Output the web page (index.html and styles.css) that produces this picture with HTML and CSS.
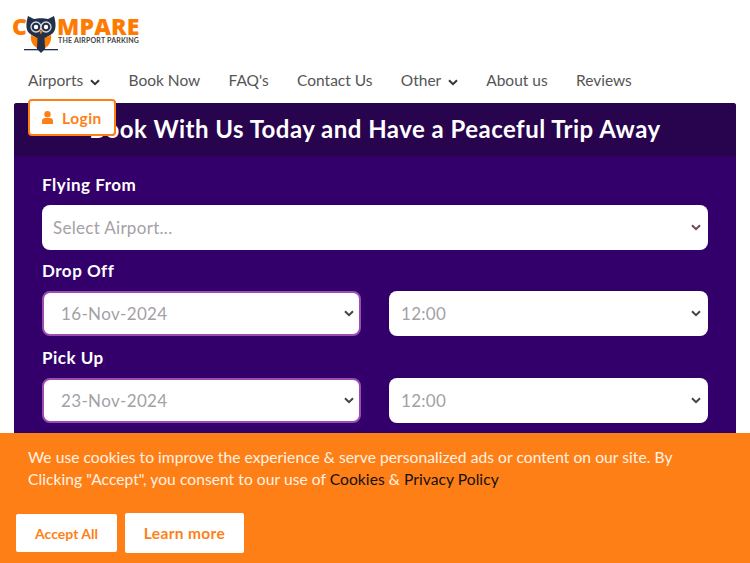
FILE: index.html
```html
<!DOCTYPE html>
<html lang="en">
<head>
  <meta charset="UTF-8">
  <meta name="viewport" content="width=device-width, initial-scale=1.0">
  <title>Compare The Airport Parking</title>
  <link rel="stylesheet" href="styles.css">
</head>
<body>

  <header class="site-header">
    <a class="logo" href="#">
      <span class="logo-c">C</span>
      <svg class="logo-owl" width="34" height="38" viewBox="0 0 34 38">
        <path d="M4 1 L10 4 C14 3 20 3 24 4 L30 1 C32 8 32.5 14 29 18 C27 20 24 21 23 22 L21 34 L17 38 L13 34 L11 22 C10 21 7 20 5 18 C1.5 14 2 8 4 1 Z" fill="#22304a"/>
        <path d="M7 20 C6 26 9 31 13 33 L13.5 23 Z" fill="#ff7a00"/>
        <path d="M27 20 C28 26 25 31 21 33 L20.5 23 Z" fill="#ff7a00"/>
        <circle cx="12" cy="12" r="5" fill="#22304a" stroke="#d5dae2" stroke-width="1.3"/>
        <circle cx="22" cy="12" r="5" fill="#22304a" stroke="#d5dae2" stroke-width="1.3"/>
        <circle cx="12" cy="12" r="2.2" fill="#fff"/>
        <circle cx="22" cy="12" r="2.2" fill="#fff"/>
        <path d="M15 15.5 L19 15.5 L17 19.5 Z" fill="#ff7a00"/>
        <rect x="0" y="34" width="34" height="1.3" fill="#22304a"/>
      </svg>
      <span class="logo-text">
        <span class="logo-main">MPARE</span>
        <span class="logo-sub">THE AIRPORT PARKING</span>
      </span>
    </a>

    <nav class="main-nav">
      <a href="#">Airports <svg class="caret" width="10" height="7" viewBox="0 0 10 7"><path d="M1 1.2 L5 5.2 L9 1.2" fill="none" stroke="#333" stroke-width="2"/></svg></a>
      <a href="#">Book Now</a>
      <a href="#">FAQ's</a>
      <a href="#">Contact Us</a>
      <a href="#">Other <svg class="caret" width="10" height="7" viewBox="0 0 10 7"><path d="M1 1.2 L5 5.2 L9 1.2" fill="none" stroke="#333" stroke-width="2"/></svg></a>
      <a href="#">About us</a>
      <a href="#">Reviews</a>
    </nav>

    <a class="login-btn" href="#">
      <svg width="11" height="13" viewBox="0 0 11 13"><circle cx="5.5" cy="3.2" r="3.2" fill="#ff7f17"/><path d="M0 13 L0 10 C0 8 1.5 7 3 7 L8 7 C9.5 7 11 8 11 10 L11 13 Z" fill="#ff7f17"/></svg>
      Login
    </a>
  </header>

  <section class="booking">
    <h1 class="booking-title">Book With Us Today and Have a Peaceful Trip Away</h1>
    <form class="booking-form">
      <label>Flying From</label>
      <div class="select-box">
        <span>Select Airport...</span>
        <svg class="select-caret" width="10" height="7" viewBox="0 0 10 7"><path d="M1 1.2 L5 5.2 L9 1.2" fill="none" stroke="#6b4a50" stroke-width="2"/></svg>
      </div>

      <label>Drop Off</label>
      <div class="form-row">
        <div class="select-box date"><span>16-Nov-2024</span><svg class="select-caret" width="10" height="7" viewBox="0 0 10 7"><path d="M1 1.2 L5 5.2 L9 1.2" fill="none" stroke="#444" stroke-width="2"/></svg></div>
        <div class="select-box"><span>12:00</span><svg class="select-caret" width="10" height="7" viewBox="0 0 10 7"><path d="M1 1.2 L5 5.2 L9 1.2" fill="none" stroke="#444" stroke-width="2"/></svg></div>
      </div>

      <label>Pick Up</label>
      <div class="form-row">
        <div class="select-box date"><span>23-Nov-2024</span><svg class="select-caret" width="10" height="7" viewBox="0 0 10 7"><path d="M1 1.2 L5 5.2 L9 1.2" fill="none" stroke="#444" stroke-width="2"/></svg></div>
        <div class="select-box"><span>12:00</span><svg class="select-caret" width="10" height="7" viewBox="0 0 10 7"><path d="M1 1.2 L5 5.2 L9 1.2" fill="none" stroke="#444" stroke-width="2"/></svg></div>
      </div>
    </form>
  </section>

  <!-- Cookie bar -->
  <div class="cookie-bar">
    <p>We use cookies to improve the experience &amp; serve personalized ads or content on our site. By Clicking "Accept", you consent to our use of <a href="#">Cookies</a> &amp; <a href="#">Privacy Policy</a></p>
    <div class="cookie-actions">
      <button class="btn-accept">Accept All</button>
      <button class="btn-learn">Learn more</button>
    </div>
  </div>

</body>
</html>
```

FILE: styles.css
```css
* {
  margin: 0;
  padding: 0;
  box-sizing: border-box;
}

body {
  font-family: "Lato", "Noto Sans", sans-serif;
  background: #fff;
  height: 563px;
  overflow: hidden;
  position: relative;
}

a {
  text-decoration: none;
}

/* Header */
.site-header {
  height: 103px;
  padding: 15px 14px 0 14px;
  position: relative;
}

.logo {
  display: flex;
  align-items: flex-start;
  height: 40px;
  margin-left: -2px;
}

.logo-c {
  font-family: "Open Sans", sans-serif;
  font-size: 23px;
  line-height: 28px;
  font-weight: 800;
  color: #ff7a00;
  width: 12px;
  margin-top: -3.5px;
}

.logo-owl {
  flex: none;
}

.logo-text {
  display: flex;
  flex-direction: column;
  margin-left: -1px;
}

.logo-main {
  font-family: "Open Sans", sans-serif;
  font-size: 23px;
  line-height: 28px;
  font-weight: 800;
  letter-spacing: 0.2px;
  color: #ff7a00;
  margin-top: -3.5px;
}

.logo-sub {
  font-size: 7px;
  line-height: 8px;
  font-weight: 700;
  letter-spacing: 0.2px;
  color: #444;
  margin-top: -4px;
  margin-left: 1px;
  white-space: nowrap;
}

.main-nav {
  display: flex;
  gap: 28.3px;
  padding-left: 14px;
  margin-top: 15px;
}

.main-nav a {
  font-size: 15.5px;
  line-height: 20px;
  color: #555;
  white-space: nowrap;
}

.caret {
  margin-left: 3px;
}

.login-btn {
  position: absolute;
  left: 28px;
  top: 99px;
  width: 88px;
  height: 37px;
  display: flex;
  align-items: center;
  gap: 9px;
  padding-left: 12px;
  background: #fff;
  border: 2px solid #ff7f17;
  border-radius: 4px;
  color: #ff7f17;
  font-size: 15.5px;
  font-weight: 700;
  letter-spacing: 0.5px;
  z-index: 2;
}

/* Booking panel */
.booking {
  margin: 0 14px;
  background: #33006b;
  border-radius: 3px 3px 0 0;
  height: 340px;
}

.booking-title {
  height: 53px;
  background: #27044d;
  border-radius: 3px 3px 0 0;
  color: #fff;
  font-size: 24px;
  line-height: 52px;
  font-weight: 700;
  letter-spacing: 0.47px;
  text-align: center;
  white-space: nowrap;
}

.booking-form {
  padding: 17px 28px 0 28px;
}

.booking-form label {
  display: block;
  color: #fff;
  font-size: 17px;
  line-height: 24px;
  font-weight: 700;
  letter-spacing: 0.5px;
  margin-bottom: 8px;
}

.form-row {
  display: grid;
  grid-template-columns: 1fr 1fr;
  gap: 28px;
}

.select-box {
  height: 45px;
  background: #fff;
  border-radius: 8px;
  padding: 0 7px 0 11px;
  display: flex;
  align-items: center;
  justify-content: space-between;
  color: #a5a0a6;
  font-size: 17px;
  letter-spacing: 0.3px;
  margin-bottom: 9px;
}

.form-row .select-box {
  margin-bottom: 10px;
  padding-left: 12px;
}

.form-row .select-box.date {
  border: 2px solid #9a4fb0;
  padding: 0 5px 0 17px;
  letter-spacing: 0.35px;
}

/* Cookie bar */
.cookie-bar {
  position: absolute;
  left: 0;
  right: 0;
  top: 433px;
  height: 130px;
  background: #ff7f17;
  padding: 13px 16px 0 16px;
  z-index: 3;
}

.cookie-bar p {
  font-size: 15.6px;
  line-height: 22px;
  letter-spacing: 0.05px;
  color: #fff2e4;
  padding: 0 40px 0 12px;
}

.cookie-bar p a {
  color: #111;
}

.cookie-actions {
  display: flex;
  align-items: center;
  gap: 8px;
  margin-top: 23px;
}

.cookie-actions button {
  background: #fff;
  border: none;
  border-radius: 2px;
  color: #ff7f17;
  font-family: inherit;
  font-weight: 700;
}

.btn-accept {
  width: 101px;
  height: 38px;
  font-size: 14px;
}

.btn-learn {
  width: 119px;
  height: 40px;
  font-size: 15.5px;
  letter-spacing: 0.35px;
}
```
